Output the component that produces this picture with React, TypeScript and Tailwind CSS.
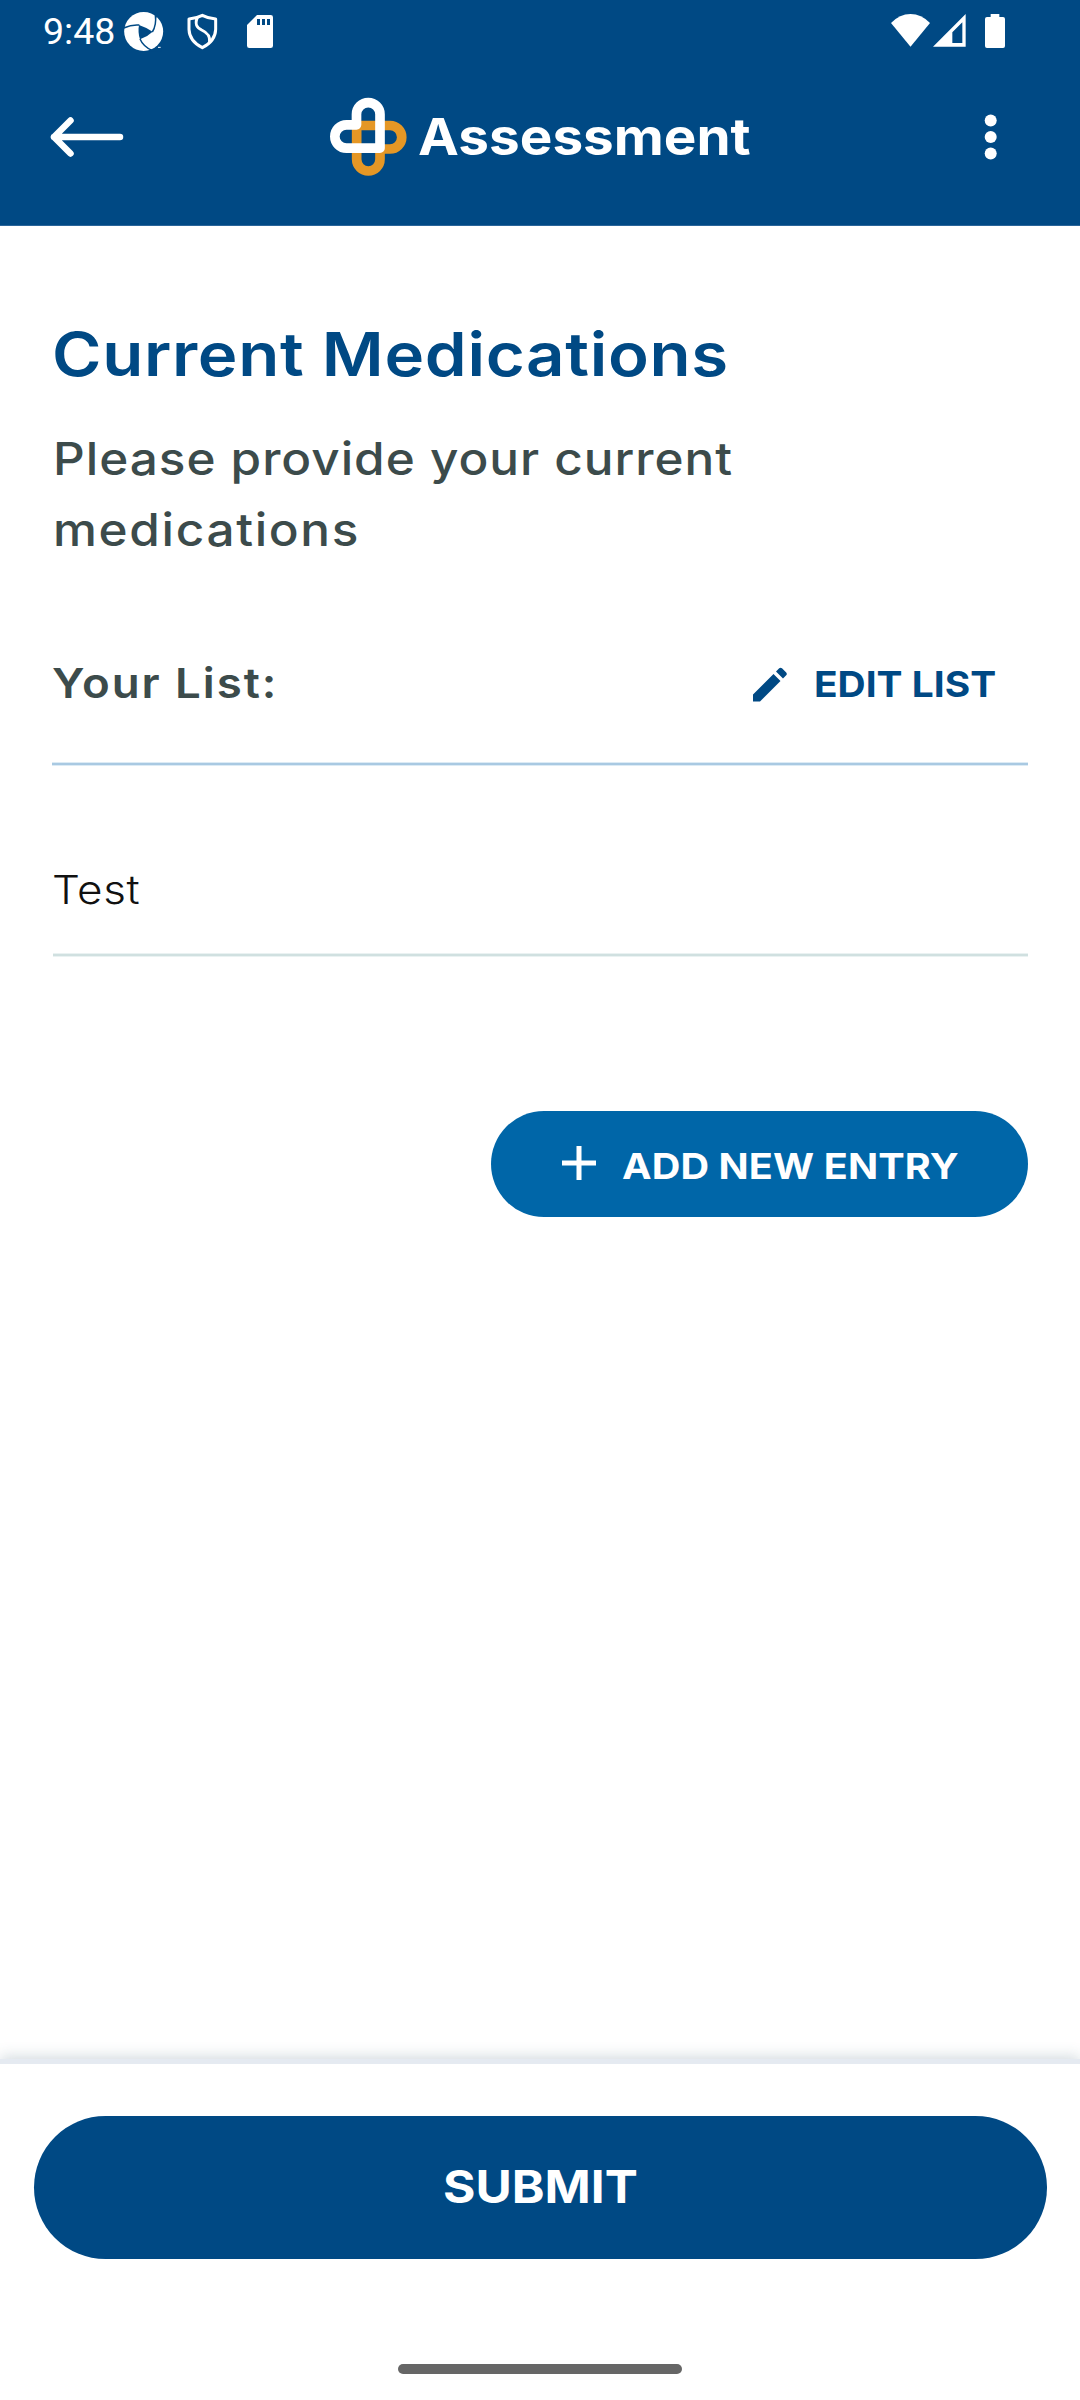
import type { ReactNode } from "react";

/* Slightly widened text, anchored on its left edge. */
function Wide({ className, children }: { className: string; children: ReactNode }) {
  return (
    <span className={`block origin-left whitespace-nowrap ${className}`}>{children}</span>
  );
}

function StatusBar() {
  return (
    <div className="flex h-[63px] items-start justify-between text-white">
      <div className="flex items-start">
        <span className="ml-[43px] block w-[81px] font-['Roboto',sans-serif] text-[37.5px] leading-[62px]">
          9:48
        </span>
        {/* Aperture notification icon */}
        <svg className="mt-3 h-10 w-10" viewBox="0 0 120 120">
          <circle cx="59" cy="58.500" r="58.500" fill="#fff" />
          <path d="M45 39 Q66 46 86 59 Q69 75 48 82 Q41 62 45 39Z" fill="#004984" />
          <g fill="none" stroke="#004984" strokeWidth="4.500">
            <path d="M46 39 Q22 37 -1 48" />
            <path d="M85 60 Q98 40 94 8" />
            <path d="M48 81 Q58 104 84 115" />
          </g>
          <path d="M92 0 L100 0 L98 20Z" fill="#004984" />
          <path d="M78 118 L84 111 L100 108 L112 104 L112 120Z" fill="#004984" />
          <path d="M102 106h8" stroke="#fff" strokeWidth="3" />
        </svg>
        {/* Shield */}
        <svg className="ml-[22px] mt-3 h-10 w-[34px]" viewBox="0 0 102 120">
          <g fill="none" stroke="#fff" strokeWidth="9" strokeLinejoin="round">
            <path d="M49 10 Q29 20 9 21 V52 Q10 87 49 107 Q88 87 89 52 V21 Q68 20 49 10Z" />
            <path d="M34 16 C25 38 33 47 47 54 C64 62 73 71 71 91" />
          </g>
        </svg>
        {/* SD card */}
        <svg className="ml-[27px] mt-[15px] h-[33px] w-[26px]" viewBox="0 0 78 99">
          <path d="M30 0H71Q78 0 78 7V92Q78 99 71 99H7Q0 99 0 92V30Z" fill="#fff" />
          <path d="M30 12h9v18h-9zM45 12h9v18h-9zM60 12h9v18h-9z" fill="#004984" />
        </svg>
      </div>
      <div className="mr-[75px] mt-3.5 flex items-start">
        <svg className="h-[33px] w-[39px]" viewBox="0 0 117 99">
          <path d="M0 27 Q26 0 58.500 0 Q91 0 117 27 L58.500 98Z" fill="#fff" />
        </svg>
        <svg className="ml-[3px] h-[33px] w-[33px]" viewBox="0 0 99 99">
          <path fillRule="evenodd" d="M98 0V98H0ZM88 25 L58 55 V87H88Z" fill="#fff" />
        </svg>
        <svg className="ml-[19px] h-[34px] w-5" viewBox="0 0 60 102">
          <path
            d="M17 0H43V9H54Q60 9 60 15V96Q60 102 54 102H6Q0 102 0 96V15Q0 9 6 9H17Z"
            fill="#fff"
          />
        </svg>
      </div>
    </div>
  );
}

function AppBar() {
  return (
    <div className="flex h-[147px] items-center">
      <svg className="ml-[50px] h-10 w-[74px]" viewBox="0 0 74 40">
        <path
          d="M20.500 3.500 L4 20 L20.500 36.500 M4 20 H70"
          fill="none"
          stroke="#fff"
          strokeWidth="6.500"
          strokeLinecap="round"
          strokeLinejoin="round"
        />
      </svg>
      <svg className="ml-[205px] h-20 w-20" viewBox="87 49 240 240">
        <g fill="none" strokeWidth="29" strokeLinejoin="round">
          <path
            d="M170 134.500H270A35.250 35.250 0 0 1 270 205H240V236A35 35 0 0 1 170 236Z"
            stroke="#e59725"
          />
          <path
            d="M169.500 132.500V101A35.250 35.250 0 0 1 240 101V202.500H139.500A35 35 0 0 1 139.500 132.500Z"
            stroke="#fff"
          />
        </g>
      </svg>
      <div className="ml-[9px] w-[566px] text-[51px] font-bold leading-[60px] text-white">
        <Wide className="scale-x-[1.075]">Assessment</Wide>
      </div>
      <svg className="h-[46px] w-[14px]" viewBox="0 0 14 46">
        <circle cx="6.700" cy="6.500" r="6" fill="#fff" />
        <circle cx="6.700" cy="23" r="6" fill="#fff" />
        <circle cx="6.700" cy="39.500" r="6" fill="#fff" />
      </svg>
    </div>
  );
}

export default function App() {
  return (
    <div className="flex h-[2400px] w-[1080px] flex-col overflow-hidden bg-white font-['Inter',sans-serif]">
      <header className="h-[226px] shrink-0 border-b border-[#2a659a] bg-[#004984]">
        <StatusBar />
        <AppBar />
      </header>

      <main className="flex-1 px-[52px] pt-[92px]">
        <h1 className="text-[60.5px] font-semibold leading-[72px] text-[#004984]">
          <Wide className="scale-x-111 tracking-[0.6px]">Current Medications</Wide>
        </h1>
        <p className="mt-[33px] text-[45px] font-[450] leading-[71px] text-[#3c4b4b]">
          <Wide className="ml-px scale-x-110 tracking-[0.88px]">Please provide your current</Wide>
          <Wide className="ml-px scale-x-110 tracking-[1.5px]">medications</Wide>
        </p>

        <div className="mt-10 flex h-[157px] items-center justify-between">
          <h2 className="text-[41.5px] font-semibold text-[#3c4b4b]">
            <Wide className="scale-x-110 tracking-[1.75px]">Your List:</Wide>
          </h2>
          <button className="flex items-center text-[#004984]">
            <svg className="h-9 w-9" viewBox="0 0 36 36">
              <path
                d="M2 28.500 L22.500 8 L29.500 15 L9 35.500 H2Z M25 5.500 L28.200 2.300 Q29.500 1 31 2.300 L35.200 6.500 Q36.400 8 35.200 9.200 L32 12.500Z"
                fill="#004984"
              />
            </svg>
            <div className="ml-[27px] w-[214px] text-left text-[36px] font-bold">
              <Wide className="scale-x-108">EDIT LIST</Wide>
            </div>
          </button>
        </div>
        <div className="h-1 border-y border-[#dcebf5] bg-[#a9c9e2]" />

        <div className="flex h-[187px] items-center pt-[60px] text-[40px] font-[350] text-[#111]">
          <Wide className="scale-x-110 tracking-[0.5px]">Test</Wide>
        </div>
        <div className="ml-px h-1 border-y border-[#eaf2f2] bg-[#d0e0e0]" />

        <button className="ml-[439px] mt-[154px] flex h-[106px] w-[537px] items-center rounded-full bg-[#0066a8] text-white">
          <svg className="-mt-0.5 ml-[71px] h-9 w-9" viewBox="0 0 36 36">
            <path d="M0 18H34M17 1V35" stroke="#fff" strokeWidth="5" />
          </svg>
          <div className="ml-6 pt-1 text-[36px] font-bold">
            <Wide className="scale-x-110 tracking-[0.1px]">ADD NEW ENTRY</Wide>
          </div>
        </button>
      </main>

      <footer className="h-[341px] shrink-0 border-t-[5px] border-[#e5eaf1] bg-white px-[33.5px] pt-[52px] shadow-[0_-2px_14px_rgba(60,90,110,0.24)]">
        <button className="flex h-[142.5px] w-full items-center rounded-full bg-[#004984] text-[45.5px] font-bold text-white">
          <Wide className="ml-[409px] scale-x-109">SUBMIT</Wide>
        </button>
        <div className="mx-auto mt-[105.5px] h-2.5 w-[284px] rounded-full bg-[#666]" />
      </footer>
    </div>
  );
}
